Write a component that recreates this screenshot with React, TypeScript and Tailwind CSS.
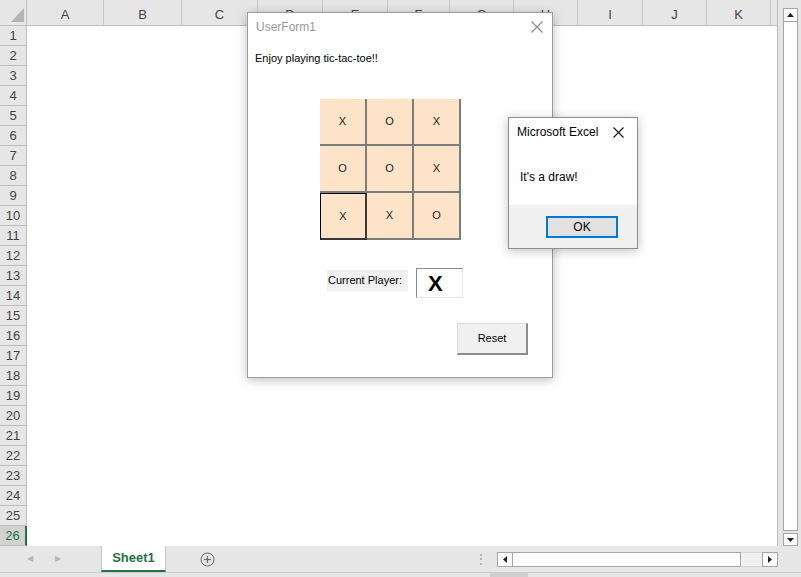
import React from "react";

const cols: [string, number][] = [
  ["A", 77], ["B", 78], ["C", 76], ["D", 65], ["E", 65], ["F", 62],
  ["G", 64], ["H", 64], ["I", 65], ["J", 64], ["K", 64],
];

const board = [
  ["X", "O", "X"],
  ["O", "O", "X"],
  ["X", "X", "O"],
];

function CloseX({ color, size }: { color: string; size: number }) {
  return (
    <svg width={size} height={size} viewBox={`0 0 ${size} ${size}`}>
      <line x1="0.5" y1="0.5" x2={size - 0.5} y2={size - 0.5} stroke={color} strokeWidth="1.1" />
      <line x1={size - 0.5} y1="0.5" x2="0.5" y2={size - 0.5} stroke={color} strokeWidth="1.1" />
    </svg>
  );
}

export default function App() {
  const rows = Array.from({ length: 26 }, (_, i) => i + 1);
  return (
    <div className="relative w-[801px] h-[577px] overflow-hidden bg-[#e6e6e6] flex flex-col font-['Liberation_Sans',Arial,sans-serif]">
      <div className="flex h-[546px]">
        {/* grid area */}
        <div className="w-[778px] flex flex-col bg-white border-r border-[#bdbdbd]">
          <div className="flex h-[26px] bg-[#e6e6e6] border-b border-[#bdbdbd]">
            <div className="w-[27px] border-r border-[#bdbdbd] flex items-end justify-end pr-[2px] pb-[3px]">
              <svg width="13" height="14" viewBox="0 0 13 14">
                <polygon points="13,0 13,14 0,14" fill="#b4b4b4" />
              </svg>
            </div>
            {cols.map(([c, w]) => (
              <div
                key={c}
                style={{ width: w }}
                className="border-r border-[#c8c8c8] flex items-center justify-center pt-[4px] text-[13px] text-[#444]"
              >
                {c}
              </div>
            ))}
            <div className="flex-1" />
          </div>
          {rows.map((r) => (
            <div key={r} className="flex h-[20px]">
              <div
                className={
                  r === 26
                    ? "w-[27px] bg-[#d2d2d2] border-r-2 border-[#217346] border-b border-b-[#bdbdbd] flex items-center justify-center text-[13px] text-[#217346]"
                    : "w-[27px] bg-[#e6e6e6] border-r border-b border-[#bdbdbd] flex items-center justify-center text-[13px] text-[#444]"
                }
              >
                {r}
              </div>
              <div className="flex-1 bg-white" />
            </div>
          ))}
        </div>
        {/* vertical scrollbar */}
        <div className="flex-1 flex flex-col items-center pt-[8px] pl-[2px]">
          <div className="w-[15px] h-[14px] border border-[#a6a6a6] bg-white flex items-center justify-center">
            <svg width="7" height="4" viewBox="0 0 7 4"><polygon points="0,4 7,4 3.5,0" fill="#222" /></svg>
          </div>
          <div className="w-[15px] flex-1 border-x border-b border-[#a6a6a6] bg-white" />
          <div className="w-[15px] h-[13px] mt-[2px] border border-[#a6a6a6] bg-white flex items-center justify-center">
            <svg width="7" height="4" viewBox="0 0 7 4"><polygon points="0,0 7,0 3.5,4" fill="#222" /></svg>
          </div>
        </div>
      </div>

      {/* tab bar */}
      <div className="h-[26px] flex items-stretch">
        <div className="w-[101px] flex items-center text-[#b8b8b8] text-[8px]">
          <span className="ml-[27px]">◀</span>
          <span className="ml-[22px]">▶</span>
        </div>
        <div className="w-[65px] bg-white border-x border-[#c8c8c8] border-b-2 border-b-[#217346] flex items-center justify-center pb-[1px] text-[13px] font-bold text-[#217346]">
          Sheet1
        </div>
        <div className="w-[82px] flex items-center justify-center">
          <svg width="15" height="15" viewBox="0 0 15 15">
            <circle cx="7.5" cy="7.5" r="6.5" fill="none" stroke="#6b6b6b" strokeWidth="1" />
            <line x1="4" y1="7.5" x2="11" y2="7.5" stroke="#6b6b6b" strokeWidth="1.2" />
            <line x1="7.5" y1="4" x2="7.5" y2="11" stroke="#6b6b6b" strokeWidth="1.2" />
          </svg>
        </div>
        <div className="flex-1 flex items-center justify-end pr-[23px]">
          <span className="text-[#9a9a9a] text-[12px] mr-[10px] leading-none">⋮</span>
          <div className="w-[281px] h-[15px] flex">
            <div className="w-[16px] border border-[#a6a6a6] bg-white flex items-center justify-center">
              <svg width="4" height="7" viewBox="0 0 4 7"><polygon points="4,0 4,7 0,3.5" fill="#222" /></svg>
            </div>
            <div className="w-[228px] border-y border-r border-[#a6a6a6] bg-white" />
            <div className="w-[21px] border-y border-[#d8d8d8] bg-[#f0f0f0]" />
            <div className="w-[16px] border border-[#a6a6a6] bg-white flex items-center justify-center">
              <svg width="4" height="7" viewBox="0 0 4 7"><polygon points="0,0 0,7 4,3.5" fill="#222" /></svg>
            </div>
          </div>
        </div>
      </div>
      <div className="flex-1 border-t border-[#d0d0d0] flex">
        <div className="ml-[490px] w-[38px] bg-[#cfcfcf]" />
      </div>

      {/* UserForm */}
      <div className="absolute left-[247px] top-[12px] w-[306px] h-[366px] bg-white border border-[#9c9c9c] shadow-[0_2px_10px_rgba(0,0,0,0.25)] flex flex-col">
        <div className="h-[28px] flex items-center justify-between pl-[8px] pr-[9px]">
          <span className="text-[12px] text-[#9a9a9a]">UserForm1</span>
          <CloseX color="#8a8a8a" size={12} />
        </div>
        <div className="mt-[10px] ml-[7px] text-[11px] leading-[14px] text-black">Enjoy playing tic-tac-toe!!</div>
        <div className="mt-[34px] ml-[72px] grid grid-cols-[47px_47px_47px] w-[141px]">
          {board.flatMap((row, ri) =>
            row.map((v, ci) => (
              <div
                key={`${ri}-${ci}`}
                className={
                  ri === 2 && ci === 0
                    ? "h-[47px] bg-[#fde3c8] border-t border-l border-black border-r-2 border-b-2 border-r-[#3a3a3a] border-b-[#3a3a3a] flex items-center justify-center text-[11px] text-[#222]"
                    : "h-[47px] bg-[#fde3c8] border-r-2 border-b-2 border-[#7d7d7d] flex items-center justify-center text-[11px] text-[#222]"
                }
              >
                {v}
              </div>
            ))
          )}
        </div>
        <div className="mt-[28px] ml-[79px] flex items-start">
          <div className="mt-[2px] w-[81px] h-[21px] bg-[#f0f0f0] flex items-center pl-[1px] text-[11px] text-black">Current Player:</div>
          <div className="ml-[8px] w-[47px] h-[30px] bg-white border-t border-l border-[#8a8a8a] border-r border-b border-r-[#e6e6e6] border-b-[#e6e6e6] flex items-center pl-[11px] pt-[2px] text-[22px] font-bold leading-none text-black">
            X
          </div>
        </div>
        <div className="mt-[25px] ml-[209px] w-[71px] h-[32px] bg-[#f0f0f0] border border-[#dcdcdc] border-r-2 border-b-2 border-r-[#8c8c8c] border-b-[#8c8c8c] flex items-center justify-center text-[11px] text-black">
          Reset
        </div>
      </div>

      {/* Message box */}
      <div className="absolute left-[508px] top-[117px] w-[130px] h-[132px] bg-white border border-[#8e8e8e] shadow-[0_2px_10px_rgba(0,0,0,0.25)] flex flex-col">
        <div className="h-[28px] flex items-center justify-between pl-[8px] pr-[13px]">
          <span className="text-[12px] text-black">Microsoft Excel</span>
          <CloseX color="#111" size={11} />
        </div>
        <div className="h-[59px] pt-[23px] pl-[11px] text-[12px] leading-[16px] text-black">It's a draw!</div>
        <div className="flex-1 bg-[#f0f0f0] pt-[11px] pl-[37px]">
          <div className="w-[72px] h-[22px] bg-[#e1e1e1] border-2 border-[#0078d7] flex items-center justify-center text-[12px] text-black">
            OK
          </div>
        </div>
      </div>
    </div>
  );
}
